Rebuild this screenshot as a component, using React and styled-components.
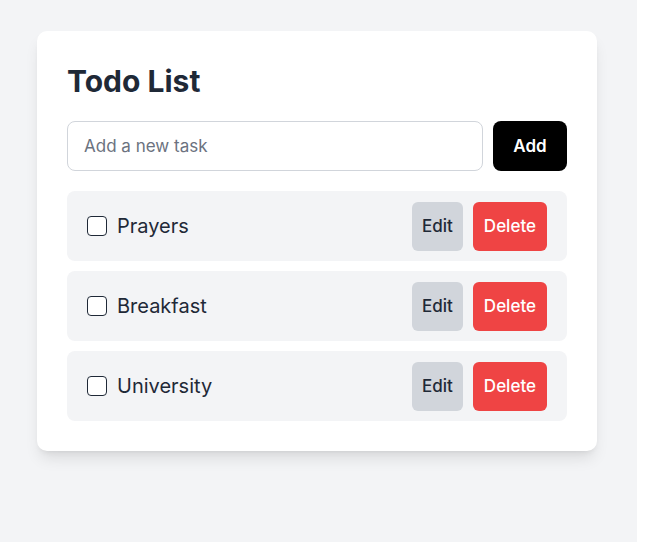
import React from 'react';
import styled, { createGlobalStyle } from 'styled-components';

const GlobalStyle = createGlobalStyle`
    body {
        margin: 0;
        background: #ffffff;
        font-family: Inter, "Noto Sans", sans-serif;
    }
`;

const todos = ['Prayers', 'Breakfast', 'University'];

const App = () => {
    return (
        <>
            <GlobalStyle />
            <Page>
                <Card>
                    <Title>Todo List</Title>
                    <AddRow>
                        <TaskInput placeholder="Add a new task" />
                        <AddButton>Add</AddButton>
                    </AddRow>
                    <List>
                        {todos.map((t) => (
                            <TodoRow key={t}>
                                <Check type="checkbox" />
                                <TodoText>{t}</TodoText>
                                <ActionButton variant="edit">Edit</ActionButton>
                                <ActionButton variant="delete">Delete</ActionButton>
                            </TodoRow>
                        ))}
                    </List>
                </Card>
            </Page>
        </>
    );
};

const Page = styled.div`
    width: 637px;
    min-height: 542px;
    box-sizing: border-box;
    background: #f3f4f6;
    padding: 31px 0 0 37px;
`;

const Card = styled.div`
    width: 560px;
    box-sizing: border-box;
    background: #ffffff;
    border-radius: 10px;
    padding: 30px;
    box-shadow: 0 10px 15px -3px rgba(0, 0, 0, 0.1), 0 4px 6px -4px rgba(0, 0, 0, 0.1);
`;

const Title = styled.h1`
    margin: 0 0 20px 0;
    font-size: 30px;
    line-height: 40px;
    font-weight: 700;
    color: #1f2937;
`;

const AddRow = styled.div`
    display: flex;
    gap: 10px;
    margin-bottom: 20px;
`;

const TaskInput = styled.input`
    flex: 1;
    height: 50px;
    box-sizing: border-box;
    border: 1px solid #d1d5db;
    border-radius: 8px;
    padding: 0 16px;
    font-family: Inter, sans-serif;
    font-size: 17px;
    color: #1f2937;
    outline: none;
    &::placeholder {
        color: #6b7280;
    }
`;

const AddButton = styled.button`
    width: 74px;
    height: 50px;
    border: none;
    border-radius: 8px;
    background: #000000;
    color: #ffffff;
    font-family: Inter, sans-serif;
    font-size: 17px;
    font-weight: 600;
`;

const List = styled.div`
    display: flex;
    flex-direction: column;
    gap: 10px;
`;

const TodoRow = styled.div`
    display: flex;
    align-items: center;
    gap: 10px;
    height: 70px;
    box-sizing: border-box;
    padding: 0 20px;
    background: #f3f4f6;
    border-radius: 8px;
`;

const Check = styled.input`
    appearance: none;
    margin: 0;
    width: 20px;
    height: 20px;
    border: 1.5px solid #1f2937;
    border-radius: 4px;
    background: #ffffff;
    box-sizing: border-box;
`;

const TodoText = styled.span`
    flex: 1;
    font-size: 20px;
    color: #1f2937;
`;

const ActionButton = styled.button`
    height: 49px;
    padding: 0 ${(p) => (p.variant === 'delete' ? '11px' : '10px')};
    border: none;
    border-radius: 6px;
    background: ${(p) => (p.variant === 'delete' ? '#ef4444' : '#d1d5db')};
    color: ${(p) => (p.variant === 'delete' ? '#ffffff' : '#1f2937')};
    font-family: Inter, sans-serif;
    font-size: 17px;
    font-weight: 500;
`;

export default App;
